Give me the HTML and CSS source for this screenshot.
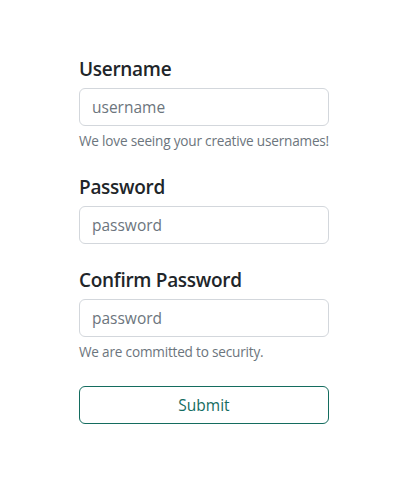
FILE: index.html
```html
<!DOCTYPE html>
<html>
<head>
<meta charset="utf-8">
<link rel="stylesheet" href="styles.css">
</head>
<body>
<form class="form">
  <div class="field">
    <label class="label" for="u">Username</label>
    <input class="input" id="u" type="text" placeholder="username">
    <div class="help">We love seeing your creative usernames!</div>
  </div>
  <div class="field">
    <label class="label" for="p">Password</label>
    <input class="input" id="p" type="password" placeholder="password">
  </div>
  <div class="field">
    <label class="label" for="c">Confirm Password</label>
    <input class="input" id="c" type="password" placeholder="password">
    <div class="help">We are committed to security.</div>
  </div>
  <button class="submit" type="button">Submit</button>
</form>
</body>
</html>
```
FILE: styles.css
```css
* { box-sizing: border-box; }
html, body { margin: 0; background: #fff; }
body {
  font-family: "Open Sans", "Noto Sans", sans-serif;
  color: #212529;
  padding-top: 57px;
}
.form {
  width: 250px;
  margin-left: 79px;
  display: flex;
  flex-direction: column;
}
.field {
  display: flex;
  flex-direction: column;
  margin-bottom: 24px;
}
.label {
  font-size: 19px;
  font-weight: 600;
  line-height: 24px;
  margin-bottom: 7px;
  letter-spacing: -0.3px;
}
.input {
  display: block;
  width: 100%;
  height: 38px;
  padding: 6px 12px;
  font-family: inherit;
  font-size: 15.5px;
  color: #212529;
  border: 1px solid #d3d7dc;
  border-radius: 6px;
  background: #fff;
  outline: none;
}
.input::placeholder { color: #6c757d; opacity: 1; }
.help {
  margin-top: 4px;
  font-size: 13.6px;
  line-height: 21px;
  letter-spacing: -0.2px;
  white-space: nowrap;
  color: #6c757d;
}
.submit {
  height: 38px;
  width: 100%;
  font-family: inherit;
  font-size: 15.5px;
  color: #146c5f;
  background: #fff;
  border: 1px solid #146c5f;
  border-radius: 6px;
}
```
